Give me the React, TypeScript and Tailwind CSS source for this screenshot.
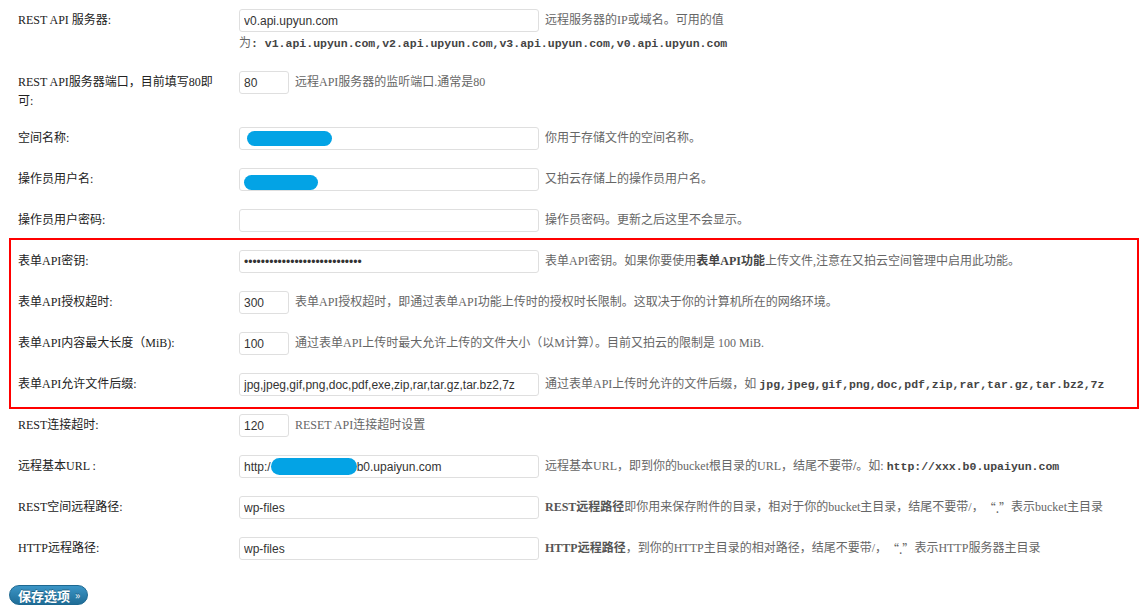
import type { ReactNode } from 'react';

const inputCls =
  "h-[23px] rounded-[3px] border border-[#dfdfdf] bg-white px-[4px] font-['Liberation_Sans',Arial,sans-serif] text-[12px] text-[#333] outline-none";

function Row({
  label,
  children,
  pad = 'pt-[9px] pb-[9px]',
}: {
  label: ReactNode;
  children: ReactNode;
  pad?: string;
}) {
  return (
    <div className={`flex items-start pl-[18px] ${pad}`}>
      <div className="w-[221px] shrink-0 pt-[2px] leading-[19px] text-[#222]">{label}</div>
      <div className="min-w-0 flex-1">{children}</div>
    </div>
  );
}

function Desc({ children }: { children: ReactNode }) {
  return <span className="h-[23px] whitespace-nowrap leading-[23px] text-[#666]">{children}</span>;
}

function Code({ children }: { children: ReactNode }) {
  return (
    <code className="font-['Liberation_Mono','Noto_Sans_CJK_SC',monospace] text-[11.5px] font-bold text-[#444]">
      {children}
    </code>
  );
}

// full-width “.” like the original font draws it
function Dot() {
  return <span className="inline-block h-[23px] align-top font-['Noto_Sans_CJK_SC',sans-serif] leading-[23px]">“.”</span>;
}

function Field({ value, small, password }: { value: string; small?: boolean; password?: boolean }) {
  return (
    <input
      readOnly
      type={password ? 'password' : 'text'}
      value={value}
      className={`${inputCls} ${small ? 'w-[50px]' : 'w-[300px]'} shrink-0`}
    />
  );
}

function Line({ children }: { children: ReactNode }) {
  return <div className="flex h-[23px] items-start gap-[6px]">{children}</div>;
}

// redacted value: painted blue blob over the text
function Blob({ className }: { className: string }) {
  return <span className={`inline-block shrink-0 rounded-full bg-[#03a3e5] ${className}`} />;
}

export default function App() {
  return (
    <div className="min-h-screen w-full bg-white font-['Liberation_Serif','Noto_Sans_CJK_SC',serif] text-[12px]">
      <Row label="REST API 服务器:" pad="pt-[9px] pb-[8px]">
        <Line>
          <Field value="v0.api.upyun.com" />
          <Desc>远程服务器的IP或域名。可用的值</Desc>
        </Line>
        <div className="mt-[1px] whitespace-nowrap leading-[20px] text-[#666]">
          为<Code>: v1.api.upyun.com,v2.api.upyun.com,v3.api.upyun.com,v0.api.upyun.com</Code>
        </div>
      </Row>

      <Row
        label={
          <>
            REST API服务器端口，目前填写80即
            <br />
            可:
          </>
        }
        pad="pt-[9px] pb-[7px]"
      >
        <Line>
          <Field value="80" small />
          <Desc>远程API服务器的监听端口.通常是80</Desc>
        </Line>
      </Row>

      <Row label="空间名称:">
        <Line>
          <div className={`${inputCls} flex w-[300px] shrink-0 items-center px-0`}>
            <Blob className="ml-[3px] h-[15px] w-[85px]" />
          </div>
          <Desc>你用于存储文件的空间名称。</Desc>
        </Line>
      </Row>

      <Row label="操作员用户名:">
        <Line>
          <div className={`${inputCls} flex w-[300px] shrink-0 items-center px-0`}>
            <Blob className="mt-[6px] h-[15px] w-[74px]" />
          </div>
          <Desc>又拍云存储上的操作员用户名。</Desc>
        </Line>
      </Row>

      <Row label="操作员用户密码:">
        <Line>
          <Field value="" />
          <Desc>操作员密码。更新之后这里不会显示。</Desc>
        </Line>
      </Row>

      <div className="relative">
        <Row label="表单API密钥:">
          <Line>
            <Field value="abcdefghijklmnopqrstuvwxyz12" password />
            <Desc>
              表单API密钥。如果你要使用<b className="text-[#444]">表单API功能</b>上传文件,注意在又拍云空间管理中启用此功能。
            </Desc>
          </Line>
        </Row>
        <Row label="表单API授权超时:">
          <Line>
            <Field value="300" small />
            <Desc>表单API授权超时，即通过表单API功能上传时的授权时长限制。这取决于你的计算机所在的网络环境。</Desc>
          </Line>
        </Row>
        <Row label="表单API内容最大长度（MiB):">
          <Line>
            <Field value="100" small />
            <Desc>通过表单API上传时最大允许上传的文件大小（以M计算）。目前又拍云的限制是 100 MiB.</Desc>
          </Line>
        </Row>
        <Row label="表单API允许文件后缀:">
          <Line>
            <Field value="jpg,jpeg,gif,png,doc,pdf,exe,zip,rar,tar.gz,tar.bz2,7z" />
            <Desc>
              通过表单API上传时允许的文件后缀，如 <Code>jpg,jpeg,gif,png,doc,pdf,zip,rar,tar.gz,tar.bz2,7z</Code>
            </Desc>
          </Line>
        </Row>
        {/* red annotation frame */}
        <div className="pointer-events-none absolute -top-[3px] -bottom-[4px] left-[9px] right-[5px] border-2 border-[#ff0000]" />
      </div>

      <Row label="REST连接超时:">
        <Line>
          <Field value="120" small />
          <Desc>RESET API连接超时设置</Desc>
        </Line>
      </Row>

      <Row label="远程基本URL :">
        <Line>
          <div className={`${inputCls} flex w-[300px] shrink-0 items-center whitespace-nowrap text-[#222]`}>
            http:/
            <Blob className="h-[17px] w-[86px]" />
            b0.upaiyun.com
          </div>
          <Desc>
            远程基本URL，即到你的bucket根目录的URL，结尾不要带<b>/</b>。如: <Code>http://xxx.b0.upaiyun.com</Code>
          </Desc>
        </Line>
      </Row>

      <Row label="REST空间远程路径:">
        <Line>
          <Field value="wp-files" />
          <Desc>
            <b className="text-[#555]">REST远程路径</b>即你用来保存附件的目录，相对于你的bucket主目录，结尾不要带/，
            <Dot />
            表示bucket主目录
          </Desc>
        </Line>
      </Row>

      <Row label="HTTP远程路径:">
        <Line>
          <Field value="wp-files" />
          <Desc>
            <b className="text-[#555]">HTTP远程路径</b>，到你的HTTP主目录的相对路径，结尾不要带/，
            <Dot />
            表示HTTP服务器主目录
          </Desc>
        </Line>
      </Row>

      <button className="ml-[9px] mt-[16px] flex h-[20px] items-center rounded-full border border-[#1d6891] bg-linear-to-b from-[#3b95c6] to-[#1f6d97] pl-[8px] pr-[7px] font-['Noto_Sans_CJK_SC',sans-serif] text-[13px] font-bold leading-none text-white [text-shadow:0_-1px_0_rgba(0,0,0,0.3)]">
        保存选项
        <span className="ml-[5px] text-[10px] text-[#dce9f2]">»</span>
      </button>
    </div>
  );
}
